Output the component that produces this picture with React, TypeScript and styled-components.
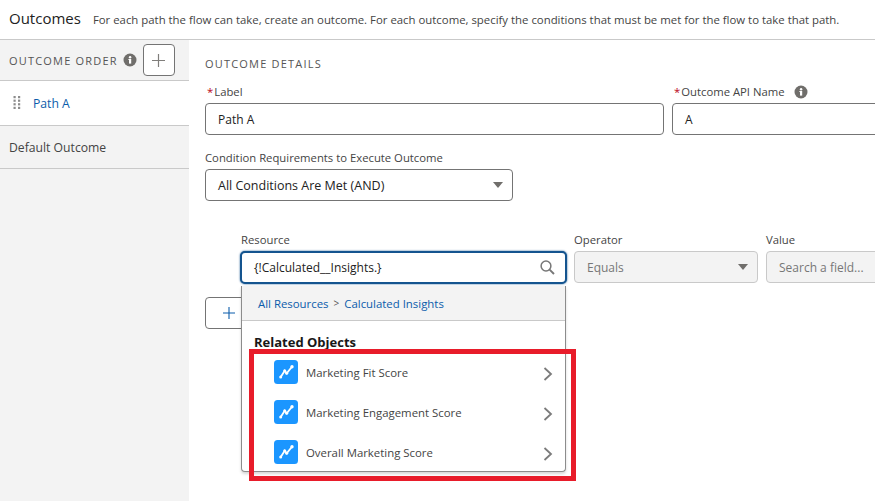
import React from 'react';
import styled, { createGlobalStyle } from 'styled-components';

const GlobalStyle = createGlobalStyle`
  html, body {
    margin: 0;
    padding: 0;
    background: #fff;
  }
  * {
    box-sizing: border-box;
  }
`;

const InfoIcon = () => (
  <svg width="14" height="14" viewBox="0 0 14 14">
    <circle cx="7" cy="7" r="6.5" fill="#706e6b" />
    <rect x="6" y="6" width="2.2" height="4.6" fill="#fff" />
    <rect x="5.4" y="6" width="2" height="1" fill="#fff" />
    <circle cx="7.1" cy="4.2" r="1.2" fill="#fff" />
  </svg>
);

const DragHandle = () => (
  <svg width="8" height="14" viewBox="0 0 8 14" fill="#8c8c8c">
    {[0, 3.6, 7.2, 10.8].map((y) => (
      <React.Fragment key={y}>
        <rect x="0.5" y={y} width="2.2" height="2.2" />
        <rect x="5" y={y} width="2.2" height="2.2" />
      </React.Fragment>
    ))}
  </svg>
);

const TrendIcon = () => (
  <svg width="24" height="24" viewBox="0 0 24 24">
    <rect width="24" height="24" rx="3.5" fill="#1b96ff" />
    <path d="M6.7 17 L10.7 10.7 L12.7 13.3 L18 6.7" fill="none" stroke="#fff" strokeWidth="1.8" />
    <circle cx="6.7" cy="17" r="1.5" fill="#fff" />
    <circle cx="10.7" cy="10.7" r="1.5" fill="#fff" />
    <circle cx="12.7" cy="13.3" r="1.5" fill="#fff" />
    <circle cx="18" cy="6.7" r="1.7" fill="#fff" />
  </svg>
);

const Chevron = () => (
  <ChevronBox>
    <svg width="10" height="14" viewBox="0 0 10 14">
      <path d="M1.5 1 L8 7 L1.5 13" fill="none" stroke="#7b7b7b" strokeWidth="1.8" />
    </svg>
  </ChevronBox>
);

const SearchIcon = () => (
  <svg width="15" height="15" viewBox="0 0 15 15">
    <circle cx="6" cy="6" r="4.9" fill="none" stroke="#777" strokeWidth="1.5" />
    <path d="M9.6 9.6 L14 14" stroke="#777" strokeWidth="1.9" />
  </svg>
);

const PlusIcon = ({ color, size }: { color: string; size: number }) => (
  <svg width={size} height={size} viewBox="0 0 12 12">
    <path d="M6 0 V12 M0 6 H12" stroke={color} strokeWidth="1.1" />
  </svg>
);

const items = ['Marketing Fit Score', 'Marketing Engagement Score', 'Overall Marketing Score'];

const App: React.FC = () => (
  <>
    <GlobalStyle />
    <Page>
      <Header>
        <Title>Outcomes</Title>
        <Description>
          For each path the flow can take, create an outcome. For each outcome, specify the conditions that must be met
          for the flow to take that path.
        </Description>
      </Header>
      <Body>
        <Sidebar>
          <SidebarHead>
            <SectionTitle>OUTCOME ORDER</SectionTitle>
            <InfoIcon />
            <SquareButton>
              <PlusIcon color="#807e7b" size={13} />
            </SquareButton>
          </SidebarHead>
          <PathRow>
            <DragHandle />
            <PathLink>Path A</PathLink>
          </PathRow>
          <DefaultRow>Default Outcome</DefaultRow>
        </Sidebar>
        <Main>
          <DetailsTitle>OUTCOME DETAILS</DetailsTitle>
          <TopFields>
            <Field>
              <FieldLabel>
                <Star>*</Star>Label
              </FieldLabel>
              <TextBox>Path A</TextBox>
            </Field>
            <Field>
              <FieldLabel>
                <Star>*</Star>Outcome API Name
                <LabelInfo>
                  <InfoIcon />
                </LabelInfo>
              </FieldLabel>
              <TextBox>A</TextBox>
            </Field>
          </TopFields>
          <ConditionField>
            <FieldLabel>Condition Requirements to Execute Outcome</FieldLabel>
            <SelectBox>
              All Conditions Are Met (AND)
              <Caret />
            </SelectBox>
          </ConditionField>
          <ConditionRow>
            <ResourceField>
              <FieldLabel>Resource</FieldLabel>
              <FocusedBox>
                {'{!Calculated__Insights.}'}
                <SearchIcon />
              </FocusedBox>
              <Dropdown>
                <Crumbs>
                  <CrumbLink>All Resources</CrumbLink>
                  <CrumbSep>&gt;</CrumbSep>
                  <CrumbLink>Calculated Insights</CrumbLink>
                </Crumbs>
                <GroupTitle>Related Objects</GroupTitle>
                {items.map((item) => (
                  <Item key={item}>
                    <TrendIcon />
                    <ItemName>{item}</ItemName>
                    <Chevron />
                  </Item>
                ))}
              </Dropdown>
              <Highlight />
            </ResourceField>
            <OperatorField>
              <FieldLabel>Operator</FieldLabel>
              <DisabledBox>
                Equals
                <Caret />
              </DisabledBox>
            </OperatorField>
            <Field>
              <FieldLabel>Value</FieldLabel>
              <DisabledBox>Search a field...</DisabledBox>
            </Field>
          </ConditionRow>
          <AddButton>
            <PlusIcon color="#0b5cab" size={12} />
          </AddButton>
        </Main>
      </Body>
    </Page>
  </>
);

const Page = styled.div`
  width: 875px;
  height: 501px;
  overflow: hidden;
  display: flex;
  flex-direction: column;
  font-family: 'Open Sans', 'Noto Sans', sans-serif;
  color: #444;
`;

const Header = styled.div`
  height: 40px;
  flex: none;
  display: flex;
  align-items: center;
  gap: 12px;
  padding: 0 0 1px 9px;
  border-bottom: 1px solid #c9c9c9;
`;

const Title = styled.h1`
  margin: 0;
  font-size: 15px;
  font-weight: 400;
  color: #222;
  position: relative;
  top: -1px;
`;

const Description = styled.p`
  margin: 0;
  font-size: 11.38px;
  color: #444;
  white-space: nowrap;
`;

const Body = styled.div`
  flex: 1;
  display: flex;
  min-height: 0;
`;

const Sidebar = styled.aside`
  width: 189px;
  flex: none;
  background: #f3f3f3;
`;

const SidebarHead = styled.div`
  height: 41px;
  display: flex;
  align-items: center;
  padding: 0 0 0 9px;
  border-bottom: 1px solid #c9c9c9;

  svg:first-of-type {
    margin-left: 5px;
  }
`;

const SectionTitle = styled.span`
  font-size: 11px;
  letter-spacing: 1.2px;
  color: #555;
  white-space: nowrap;
`;

const SquareButton = styled.div`
  width: 32px;
  height: 32px;
  margin-left: 6px;
  background: #fff;
  border: 1px solid #747474;
  border-radius: 4px;
  display: flex;
  align-items: center;
  justify-content: center;

  && svg {
    margin-left: 0;
  }
`;

const PathRow = styled.div`
  height: 45px;
  display: flex;
  align-items: center;
  gap: 12px;
  padding-left: 13px;
  background: #fff;
  border-bottom: 1px solid #c9c9c9;
`;

const PathLink = styled.span`
  font-size: 12.2px;
  color: #0b5cab;
`;

const DefaultRow = styled.div`
  height: 43px;
  display: flex;
  align-items: center;
  padding-left: 9px;
  font-size: 12.2px;
  color: #444;
  border-bottom: 1px solid #c9c9c9;
`;

const Main = styled.main`
  flex: none;
  width: 720px;
  padding: 16px 0 0 16px;
`;

const DetailsTitle = styled.h2`
  margin: 0 0 12px;
  font-size: 11px;
  font-weight: 400;
  letter-spacing: 1.2px;
  color: #555;
  line-height: 16px;
`;

const TopFields = styled.div`
  display: grid;
  grid-template-columns: 459px 260px;
  column-gap: 8px;
`;

const Field = styled.div`
  display: flex;
  flex-direction: column;
  min-width: 0;
`;

const FieldLabel = styled.label`
  display: flex;
  align-items: center;
  height: 15px;
  margin-bottom: 4px;
  font-size: 11.3px;
  color: #444;
  white-space: nowrap;
`;

const Star = styled.span`
  color: #ba0517;
  margin: 0 1px 0 2px;
`;

const LabelInfo = styled.span`
  display: inline-flex;
  margin-left: 9px;
`;

const TextBox = styled.div`
  height: 32px;
  display: flex;
  align-items: center;
  padding: 0 12px;
  font-size: 12px;
  color: #222;
  background: #fff;
  border: 1px solid #747474;
  border-radius: 4px;
`;

const Caret = styled.span`
  margin-left: auto;
  width: 0;
  height: 0;
  border-left: 5.5px solid transparent;
  border-right: 5.5px solid transparent;
  border-top: 6px solid #706e6b;
`;

const ConditionField = styled(Field)`
  width: 308px;
  margin-top: 15px;
`;

const SelectBox = styled(TextBox)`
  padding-right: 9px;
  font-size: 12.5px;
`;

const ConditionRow = styled.div`
  display: grid;
  grid-template-columns: 327px 183px 140px;
  column-gap: 8px;
  margin: 31px 0 0 35px;
`;

const ResourceField = styled(Field)`
  position: relative;

  ${FieldLabel} {
    padding-left: 1px;
  }
`;

const OperatorField = styled(Field)`
  margin-left: -1px;
`;

const FocusedBox = styled(TextBox)`
  height: 33px;
  justify-content: space-between;
  padding: 0 10px 0 12px;
  font-size: 12px;
  border: 2px solid #14548f;
  border-radius: 5px;
  box-shadow: 0 0 2px #14548f;
`;

const DisabledBox = styled(TextBox)`
  color: #777;
  background: #f3f3f3;
  border-color: #c9c9c9;
  padding-right: 9px;
`;

const Dropdown = styled.div`
  position: absolute;
  top: 54px;
  left: 1px;
  width: 325px;
  height: 186px;
  background: #fff;
  border: 1px solid #8c8c8c;
  border-top: none;
  border-radius: 0 0 4px 4px;
  box-shadow: 0 2px 3px rgba(0, 0, 0, 0.16);
  z-index: 2;
`;

const Crumbs = styled.div`
  height: 35px;
  display: flex;
  align-items: center;
  gap: 5px;
  padding-left: 16px;
  background: #f3f3f3;
  border-bottom: 1px solid #c9c9c9;
`;

const CrumbLink = styled.span`
  font-size: 11.4px;
  color: #0b5cab;
`;

const CrumbSep = styled.span`
  font-size: 10px;
  color: #555;
`;

const GroupTitle = styled.div`
  margin: 12px 0 1px 12px;
  height: 18px;
  line-height: 18px;
  font-size: 13px;
  font-weight: 700;
  color: #181818;
`;

const Item = styled.div`
  height: 40px;
  display: flex;
  align-items: center;
  padding: 0 12px 0 32px;
`;

const ItemName = styled.span`
  flex: 1;
  margin-left: 8px;
  font-size: 11.4px;
  color: #444;
`;

const ChevronBox = styled.span`
  display: inline-flex;
  margin-top: 3px;
`;

const Highlight = styled.div`
  position: absolute;
  top: 117px;
  left: 9px;
  width: 327px;
  height: 132px;
  border: 5px solid #e81c2a;
  z-index: 3;
  pointer-events: none;
`;

const AddButton = styled.div`
  width: 48px;
  height: 32px;
  margin-top: 13px;
  display: flex;
  align-items: center;
  justify-content: center;
  background: #fff;
  border: 1px solid #747474;
  border-radius: 4px;
`;

export default App;
